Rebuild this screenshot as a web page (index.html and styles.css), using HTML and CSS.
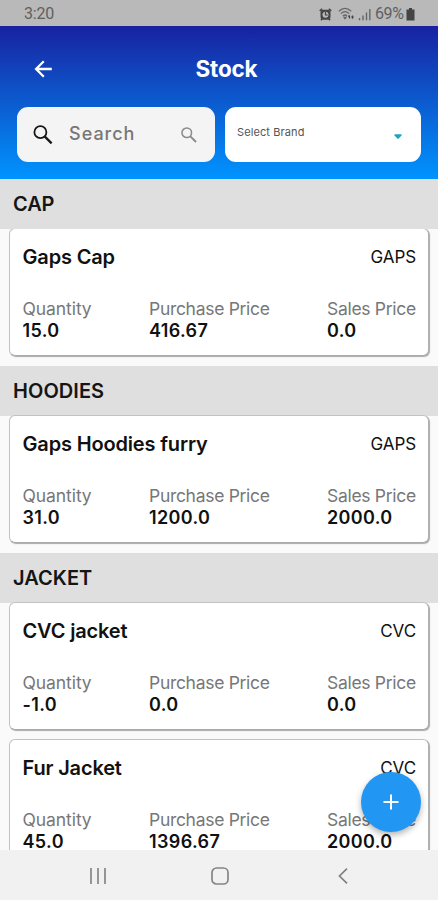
FILE: index.html
```html
<!DOCTYPE html>
<html lang="en">
<head>
<meta charset="utf-8">
<title>Stock</title>
<link rel="stylesheet" href="styles.css">
</head>
<body>
<div class="screen">
  <div class="status">
    <span class="time">3:20</span>
    <div class="indicators">
      <svg class="alarm" width="13" height="13" viewBox="0 0 13 13"><path d="M.7 2.8 3.2.8M12.3 2.8 9.8.8M2 12.3l1.2-1.5M11 12.3l-1.2-1.5" stroke="#444" stroke-width="1.5"/><rect x="1.5" y="1.7" width="10" height="10" rx="3" fill="#444"/><circle cx="6.5" cy="6.8" r="3" fill="#b9b9b9"/><path d="M6.5 4v3h2.3" stroke="#444" stroke-width="1.2" fill="none"/></svg>
      <svg class="wifi" width="17" height="14" viewBox="0 0 17 14" fill="none" stroke="#666" stroke-width="1.2"><path d="M.8 4.3Q7 -1.5 13.2 4.3M2.8 6.7Q7 2.5 11.2 6.7M4.9 9Q7 7 9.1 9"/><path d="M6 10.3h2L7 11.7z" fill="#555"/><path d="M11.5 11.5V8.5M10.3 9.7l1.2-1.2M14.5 8.5v3.2M13.2 10h2.6" stroke="#444"/></svg>
      <svg class="signal" width="13" height="13" viewBox="0 0 13 13" stroke="#666" stroke-width="1.4"><path d="M1.5 10v2.3M5 7.5v4.8M8.5 4.5v7.8M11.8 1v11.3"/></svg>
      <span class="percent">69%</span>
      <svg class="battery" width="9" height="13" viewBox="0 0 9 13"><path d="M3 0h3v1.5h2.5v11H.5v-11H3z" fill="#444"/></svg>
    </div>
  </div>
  <header class="header">
    <div class="titlebar">
      <svg class="back" width="18" height="18" viewBox="0 0 18 18" fill="none" stroke="#fff" stroke-width="2.3"><path d="M17.8 9H2.6M9.8 1.3 2.1 9l7.7 7.7"/></svg>
      <h1>Stock</h1>
    </div>
    <div class="filters">
      <div class="search">
        <svg width="20" height="20" viewBox="0 0 20 20" fill="none" stroke="#161616"><circle cx="7.4" cy="7.2" r="6" stroke-width="1.8"/><path d="m11.6 11.4 7 7" stroke-width="2.3"/></svg>
        <span>Search</span>
        <svg width="16" height="16" viewBox="0 0 20 20" fill="none" stroke="#8b8b8b"><circle cx="7.2" cy="7.2" r="6" stroke-width="1.9"/><path d="m11.4 11.4 7.4 7.4" stroke-width="2.4"/></svg>
      </div>
      <div class="brand">
        <span>Select Brand</span>
        <svg width="8" height="5" viewBox="0 0 8 5"><path d="M.5 .3h7v1.2L4.5 4.7h-1L.5 1.5z" fill="#20a3be"/></svg>
      </div>
    </div>
  </header>
  <main class="list">
    <h2 class="pinned">CAP</h2>
    <article class="card">
      <div class="top"><h3>Gaps Cap</h3><span>GAPS</span></div>
      <dl><div><dt>Quantity</dt><dd>15.0</dd></div><div><dt>Purchase Price</dt><dd>416.67</dd></div><div><dt>Sales Price</dt><dd>0.0</dd></div></dl>
    </article>
    <h2>HOODIES</h2>
    <article class="card">
      <div class="top"><h3>Gaps Hoodies furry</h3><span>GAPS</span></div>
      <dl><div><dt>Quantity</dt><dd>31.0</dd></div><div><dt>Purchase Price</dt><dd>1200.0</dd></div><div><dt>Sales Price</dt><dd>2000.0</dd></div></dl>
    </article>
    <h2>JACKET</h2>
    <article class="card">
      <div class="top"><h3>CVC jacket</h3><span>CVC</span></div>
      <dl><div><dt>Quantity</dt><dd>-1.0</dd></div><div><dt>Purchase Price</dt><dd>0.0</dd></div><div><dt>Sales Price</dt><dd>0.0</dd></div></dl>
    </article>
    <article class="card">
      <div class="top"><h3>Fur Jacket</h3><span>CVC</span></div>
      <dl><div><dt>Quantity</dt><dd>45.0</dd></div><div><dt>Purchase Price</dt><dd>1396.67</dd></div><div><dt>Sales Price</dt><dd>2000.0</dd></div></dl>
    </article>
  </main>
  <button class="fab" aria-label="Add"><svg width="16" height="16" viewBox="0 0 16 16" stroke="#fff" stroke-width="2"><path d="M8 .5v15M.5 8h15"/></svg></button>
  <nav class="nav">
    <svg width="18" height="16" viewBox="0 0 18 16" stroke="#8c8c8c" stroke-width="1.8"><path d="M2 0v16M9 0v16M16 0v16"/></svg>
    <svg class="home" width="18" height="18" viewBox="0 0 18 18" fill="none" stroke="#858585" stroke-width="1.7"><rect x="1" y="1" width="16" height="16" rx="4.5"/></svg>
    <svg width="10" height="16" viewBox="0 0 10 16" fill="none" stroke="#808080" stroke-width="1.7"><path d="M9 .7 1.5 8 9 15.3"/></svg>
  </nav>
</div>
</body>
</html>
```
FILE: styles.css
```css
* { box-sizing: border-box; }
body { margin: 0; font-family: Inter, "Liberation Sans", sans-serif; color: #111; }
h1, h2, h3, dl, dd { margin: 0; }
svg { display: block; flex: none; }
.screen { position: relative; width: 438px; height: 900px; display: flex; flex-direction: column; overflow: hidden; background: #fafafa; }
.status { height: 26px; flex: none; display: flex; align-items: center; justify-content: space-between; padding: 2px 23px 0 24px; background: #b9b9b9; color: #606060; font: 16px/24px Roboto, sans-serif; }
.time { letter-spacing: -.2px; }
.indicators { display: flex; align-items: center; }
.wifi { margin-left: 6px; }
.signal { margin-left: 3px; }
.percent { margin-left: 4px; width: 30px; letter-spacing: -.4px; white-space: nowrap; }
.battery { margin-left: 1px; }
.header { height: 153px; flex: none; background: linear-gradient(#1822a0, #0094ff); }
.titlebar { height: 81px; display: grid; grid-template-columns: 18px 1fr 18px; align-items: center; padding: 5px 19px 0 34px; }
h1 { text-align: center; font-size: 22.5px; line-height: 28px; font-weight: 700; color: #fff; letter-spacing: -.2px; }
.filters { display: flex; gap: 10px; padding: 0 17px; }
.search, .brand { height: 55px; border-radius: 11px; display: flex; align-items: center; }
.search { width: 198px; padding: 0 18px 0 16px; background: #f4f4f4; }
.search span { flex: 1; padding: 0 0 2px 16px; font-size: 18px; font-weight: 500; letter-spacing: 1px; color: #777; }
.brand { width: 196px; justify-content: space-between; padding: 0 19px 0 12px; background: #fff; }
.brand span { font-size: 11px; line-height: 14px; letter-spacing: .1px; color: #555; padding-bottom: 5px; }
.brand svg { margin-top: 4px; }
.list { flex: 1; min-height: 0; overflow: hidden; }
h2 { height: 50px; padding-left: 13px; background: #dfdfdf; font-size: 20px; line-height: 50px; font-weight: 600; letter-spacing: .05px; color: #151515; }
.pinned { position: relative; z-index: 1; letter-spacing: -.1px; }
.card { width: 420px; height: 128px; margin: -1px 0 10px 9px; padding: 14px 12px 0 12.5px; border-radius: 6px; background: #fff; border: 1px solid #c2c2c2; border-right-color: #b0b0b0; border-bottom-color: #aaa; box-shadow: 1px 1px 1px #aaa; }
.top { display: flex; justify-content: space-between; align-items: center; height: 28px; }
h3 { font-size: 20px; line-height: 28px; font-weight: 600; letter-spacing: -.16px; }
.top span { font-size: 17px; letter-spacing: -.1px; }
dl { display: grid; grid-template-columns: 126.5px 178px 1fr; margin-top: 27px; padding: 0; white-space: nowrap; }
dt { font-size: 17.5px; line-height: 22px; letter-spacing: -.3px; color: #777; }
dl div:first-child dt { letter-spacing: -.08px; }
dd { margin-top: 3px; font-size: 18px; line-height: 16px; font-weight: 600; letter-spacing: .35px; }
.fab { position: absolute; left: 361px; top: 772px; width: 60px; height: 60px; border: 0; border-radius: 50%; padding: 0; background: #2196f3; display: flex; align-items: center; justify-content: center; box-shadow: 0 3px 6px rgba(0,0,0,.3); }
.nav { height: 50px; flex: none; background: #f1f1f1; display: flex; align-items: center; justify-content: space-between; padding: 2px 90px 0 89px; }
.home { margin-right: 5px; }
```
